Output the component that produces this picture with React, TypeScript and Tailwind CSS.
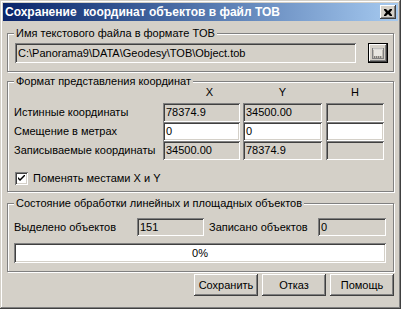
import React from 'react';

const raised =
    'bg-[#d4d0c8] shadow-[inset_-1px_-1px_#404040,inset_1px_1px_#ffffff,inset_-2px_-2px_#808080,inset_2px_2px_#d4d0c8]';
const sunken =
    'shadow-[inset_1px_1px_#808080,inset_-1px_-1px_#ffffff,inset_2px_2px_#404040,inset_-2px_-2px_#d4d0c8]';

function Group({ title, className, children }: { title: string; className: string; children: React.ReactNode }) {
    return (
        <div className={`relative border border-[#808080] shadow-[inset_1px_1px_#ffffff,1px_1px_#ffffff] ${className}`}>
            <span className="absolute -top-[7px] left-[6px] bg-[#d4d0c8] px-[2px] leading-[13px] whitespace-nowrap">
                {title}
            </span>
            {children}
        </div>
    );
}

function Field({ value, white = false, className = '' }: { value: string; white?: boolean; className?: string }) {
    return (
        <div
            className={`flex items-center pl-[3px] whitespace-nowrap overflow-hidden ${sunken} ${white ? 'bg-white' : 'bg-[#d4d0c8]'} ${className}`}
        >
            {value}
        </div>
    );
}

const rows = [
    { label: 'Истинные координаты', x: '78374.9', y: '34500.00', white: false },
    { label: 'Смещение в метрах', x: '0', y: '0', white: true },
    { label: 'Записываемые координаты', x: '34500.00', y: '78374.9', white: false },
];

export default function App() {
    return (
        <div
            className="w-[401px] h-[309px] bg-[#d4d0c8] p-[3px] text-[11px] text-black shadow-[inset_-1px_-1px_#404040,inset_1px_1px_#d4d0c8,inset_-2px_-2px_#808080,inset_2px_2px_#ffffff] overflow-hidden"
            style={{ fontFamily: '"Liberation Sans", Arial, sans-serif' }}
        >
            {/* title bar */}
            <div className="h-[18px] flex items-center justify-between bg-gradient-to-r from-[#0a246a] to-[#a6caf0] pl-[2px] pr-[2px]">
                <span className="text-white font-bold text-[12px] whitespace-pre leading-none">
                    Сохранение  координат объектов в файл TOB
                </span>
                <div className={`w-[16px] h-[14px] flex items-center justify-center ${raised}`}>
                    <svg width="8" height="7" viewBox="0 0 8 7">
                        <path d="M0 0h2l2 2 2-2h2v1l-2 2.5 2 2.5v1h-2l-2-2-2 2h-2v-1l2-2.5-2-2.5z" fill="#000" />
                    </svg>
                </div>
            </div>

            <div className="px-[4px] pt-[12px]">
                {/* file name */}
                <Group title="Имя текстового файла в формате TOB" className="h-[39px] pt-[9px] pl-[7px] pr-[5px] flex items-start justify-between">
                    <Field value="C:\Panorama9\DATA\Geodesy\TOB\Object.tob" className="w-[341px] h-[20px] pl-[2px]" />
                    <div className="w-[20px] h-[20px] bg-black p-px">
                        <div className={`w-full h-full flex items-center justify-center ${raised}`}>
                            <svg width="12" height="11" viewBox="0 0 12 11">
                                <rect x="0.5" y="0.5" width="11" height="10" fill="#bdb9b1" stroke="#808080" />
                                <rect x="2" y="2" width="8" height="6" fill="#e8e6e0" />
                                <path d="M2 9h1M4 9h1M6 9h1M8 9h1" stroke="#404040" />
                                <path d="M1 1h10" stroke="#ffffff" />
                            </svg>
                        </div>
                    </div>
                </Group>

                {/* coordinates */}
                <Group title="Формат представления координат" className="mt-[9px] h-[111px] pt-[4px] pl-[6px] pr-[8px]">
                    <div className="flex h-[13px] leading-[13px] mb-[4px]">
                        <div className="w-[149px]" />
                        <div className="w-[77px] text-center pl-[16px]">X</div>
                        <div className="w-[79px] ml-[3px] text-center">Y</div>
                        <div className="w-[58px] ml-[4px] text-center">H</div>
                    </div>
                    {rows.map((r) => (
                        <div key={r.label} className="flex h-[19px] items-center">
                            <div className="w-[149px] whitespace-nowrap">{r.label}</div>
                            <Field value={r.x} white={r.white} className="w-[77px] h-full" />
                            <Field value={r.y} white={r.white} className="w-[79px] h-full ml-[3px]" />
                            <Field value="" white={r.white} className="w-[58px] h-full ml-[4px]" />
                        </div>
                    ))}
                    <div className="mt-[12px] flex items-center h-[13px] pl-[1px]">
                        <div className={`w-[13px] h-[13px] bg-white flex items-center justify-center ${sunken}`}>
                            <svg width="7" height="7" viewBox="0 0 7 7">
                                <path d="M0 2l2 2 5-5v2l-5 5-2-2z" fill="#000" />
                            </svg>
                        </div>
                        <span className="ml-[5px] whitespace-nowrap">Поменять местами X и Y</span>
                    </div>
                </Group>

                {/* state */}
                <Group title="Состояние обработки линейных и площадных объектов" className="mt-[11px] h-[69px] pt-[14px] pl-[6px] pr-[5px]">
                    <div className="flex items-center h-[18px]">
                        <div className="w-[123px] whitespace-nowrap">Выделено объектов</div>
                        <Field value="151" className="w-[67px] h-full" />
                        <div className="w-[114px] pl-[5px] whitespace-nowrap">Записано объектов</div>
                        <Field value="0" className="w-[68px] h-full" />
                    </div>
                    <div className={`mt-[7px] w-[372px] h-[20px] bg-white flex items-center justify-center ${sunken}`}>
                        0%
                    </div>
                </Group>

                {/* buttons */}
                <div className="mt-[2px] flex justify-end gap-[4px]">
                    {['Сохранить', 'Отказ', 'Помощь'].map((b) => (
                        <button key={b} className={`w-[64px] h-[22px] ${raised}`}>
                            {b}
                        </button>
                    ))}
                </div>
            </div>
        </div>
    );
}
